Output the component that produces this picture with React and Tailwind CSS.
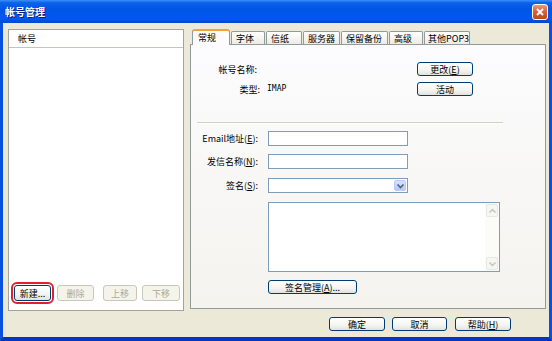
import React from 'react';

function Btn({ w, h = 'h-[14px]', disabled, children, className = '' }) {
  return (
    <div
      className={`flex shrink-0 items-center justify-center whitespace-nowrap rounded-[3px] border leading-none ${
        disabled
          ? 'border-[#c9c7ba] bg-[#f5f4ea] text-[#aca899]'
          : 'border-[#003c74] bg-[linear-gradient(to_bottom,#ffffff_0%,#f4f4f0_60%,#e3e2da_100%)]'
      } ${w} ${h} ${className}`}
    >
      {children}
    </div>
  );
}

function Chevron({ up, color = '#c4c4bc', width = 1.5 }) {
  return (
    <svg width="9" height="6" viewBox="0 0 9 6">
      <path
        d={up ? 'M1.5 4.5 L4.5 1.5 L7.5 4.5' : 'M1.5 1.5 L4.5 4.5 L7.5 1.5'}
        fill="none"
        stroke={color}
        strokeWidth={width}
      />
    </svg>
  );
}

function Tab({ w, active, pad = 'pl-[4px]', children }) {
  if (active) {
    return (
      <div
        className={`relative z-10 -mb-px flex h-[16px] items-start whitespace-nowrap rounded-t-[3px] border-x border-t-[2px] border-x-[#919b9c] border-t-[#f0a434] bg-[#fcfcfe] pl-[5px] pt-[2px] leading-none ${w}`}
      >
        {children}
      </div>
    );
  }
  return (
    <div
      className={`ml-[1px] flex h-[13px] items-center whitespace-nowrap rounded-t-[2px] border-x border-t border-[#919b9c] bg-[linear-gradient(to_bottom,#ffffff,#ecebe5)] leading-none ${pad} ${w}`}
    >
      {children}
    </div>
  );
}

export default function App() {
  return (
    <div className="flex h-[341px] w-[552px] flex-col overflow-hidden font-['Noto_Sans_CJK_SC',sans-serif] text-[9px] text-black">
      {/* title bar */}
      <div className="flex h-[23px] shrink-0 items-center justify-between bg-[linear-gradient(to_bottom,#3d8ff8_0%,#0b62ea_12%,#0055e5_40%,#0058ee_80%,#0048cc_100%)] pl-[5px] pr-[4px]">
        <span className="text-[10px] font-bold leading-none text-white [text-shadow:1px_1px_#0a1b80]">帐号管理</span>
        <div className="flex h-[16px] w-[16px] items-center justify-center rounded-[3px] border border-white bg-[linear-gradient(to_bottom,#e99a7e,#d55f3a_50%,#c2451f)]">
          <svg width="10" height="10" viewBox="0 0 10 10">
            <path d="M2 2 L8 8 M8 2 L2 8" stroke="white" strokeWidth="1.8" />
          </svg>
        </div>
      </div>

      {/* body */}
      <div className="flex flex-1 border-x-[3px] border-b-[4px] border-x-[#0a50e0] border-b-[#0834c4] bg-[#ece9d8] pl-[5px] pr-[3px] pt-[6px]">
        {/* account list */}
        <div className="flex h-[282px] w-[176px] shrink-0 flex-col border border-[#a5a49c] bg-white">
          <div className="flex h-[18px] items-center border-b border-[#c5c5bd] pl-[9px] leading-none">帐号</div>
          <div className="flex-1" />
          <div className="flex items-center pb-[9px] pl-[5px]">
            <Btn w="w-[37px]" h="h-[16px]" className="outline-2 outline-offset-[1px] outline-[#e0202a]">
              新建...
            </Btn>
            <Btn w="w-[37px]" h="h-[16px]" disabled className="ml-[6px]">删除</Btn>
            <Btn w="w-[34px]" h="h-[16px]" disabled className="ml-[9px]">上移</Btn>
            <Btn w="w-[38px]" h="h-[16px]" disabled className="ml-[5px]">下移</Btn>
          </div>
        </div>

        {/* right side */}
        <div className="ml-[6px] flex w-[356px] flex-col">
          <div className="flex h-[15px] items-end pl-[2px]">
            <Tab w="w-[38px]" active>常规</Tab>
            <Tab w="w-[34px]">字体</Tab>
            <Tab w="w-[36px]">信纸</Tab>
            <Tab w="w-[37px]">服务器</Tab>
            <Tab w="w-[47px]">保留备份</Tab>
            <Tab w="w-[34px]">高级</Tab>
            <Tab w="w-[46px]" pad="pl-[3px]">其他POP3</Tab>
          </div>

          <div className="flex h-[265px] flex-col border border-[#919b9c] bg-[linear-gradient(to_bottom,#fcfcfe,#f4f3ee)]">
            <div className="mt-[17px] flex h-[14px] items-center">
              <span className="w-[66px] text-right leading-none">帐号名称:</span>
              <span className="w-[160px]" />
              <Btn w="w-[56px]">更改(<u>E</u>)</Btn>
            </div>
            <div className="mt-[6px] flex h-[14px] items-center">
              <span className="w-[69px] text-right leading-none">类型:</span>
              <span className="w-[157px] pl-[7px] font-['DejaVu_Sans_Mono',monospace] text-[8px] leading-none">IMAP</span>
              <Btn w="w-[56px]">活动</Btn>
            </div>

            <div className="ml-[6px] mt-[26px] h-[2px] w-[306px] border-b border-t border-b-white border-t-[#d0d0bf]" />

            <div className="mt-[7px] flex h-[15px] items-center">
              <span className="w-[67px] whitespace-nowrap text-right leading-none">Email地址(<u>E</u>):</span>
              <div className="ml-[10px] h-[15px] w-[140px] border border-[#7f9db9] bg-white" />
            </div>
            <div className="mt-[8px] flex h-[15px] items-center">
              <span className="w-[67px] whitespace-nowrap text-right leading-none">发信名称(<u>N</u>):</span>
              <div className="ml-[10px] h-[15px] w-[140px] border border-[#7f9db9] bg-white" />
            </div>
            <div className="mt-[9px] flex h-[15px] items-center">
              <span className="w-[67px] whitespace-nowrap text-right leading-none">签名(<u>S</u>):</span>
              <div className="ml-[10px] flex h-[15px] w-[140px] justify-end border border-[#7f9db9] bg-white p-px">
                <div className="flex w-[12px] items-center justify-center rounded-[2px] border border-[#b9cdf6] bg-[linear-gradient(to_bottom,#d6e2fb,#b3c9f5)]">
                  <Chevron color="#4d6185" width={1.6} />
                </div>
              </div>
            </div>

            <div className="ml-[77px] mt-[9px] flex h-[70px] w-[232px] justify-end border border-[#7f9db9] bg-white">
              <div className="flex w-[14px] flex-col justify-between bg-[#fbfbf8] p-px">
                <div className="flex h-[13px] items-center justify-center rounded-[2px] border border-[#e8e8e2] bg-[#f6f6f2]">
                  <Chevron up />
                </div>
                <div className="flex h-[13px] items-center justify-center rounded-[2px] border border-[#e8e8e2] bg-[#f6f6f2]">
                  <Chevron />
                </div>
              </div>
            </div>

            <Btn w="w-[89px]" className="ml-[77px] mt-[8px]">签名管理(<u>A</u>)...</Btn>
          </div>

          <div className="mt-[8px] flex h-[14px]">
            <Btn w="w-[56px]" className="ml-[139px]">确定</Btn>
            <Btn w="w-[55px]" className="ml-[7px]">取消</Btn>
            <Btn w="w-[56px]" className="ml-[8px]">帮助(<u>H</u>)</Btn>
          </div>
        </div>
      </div>
    </div>
  );
}
